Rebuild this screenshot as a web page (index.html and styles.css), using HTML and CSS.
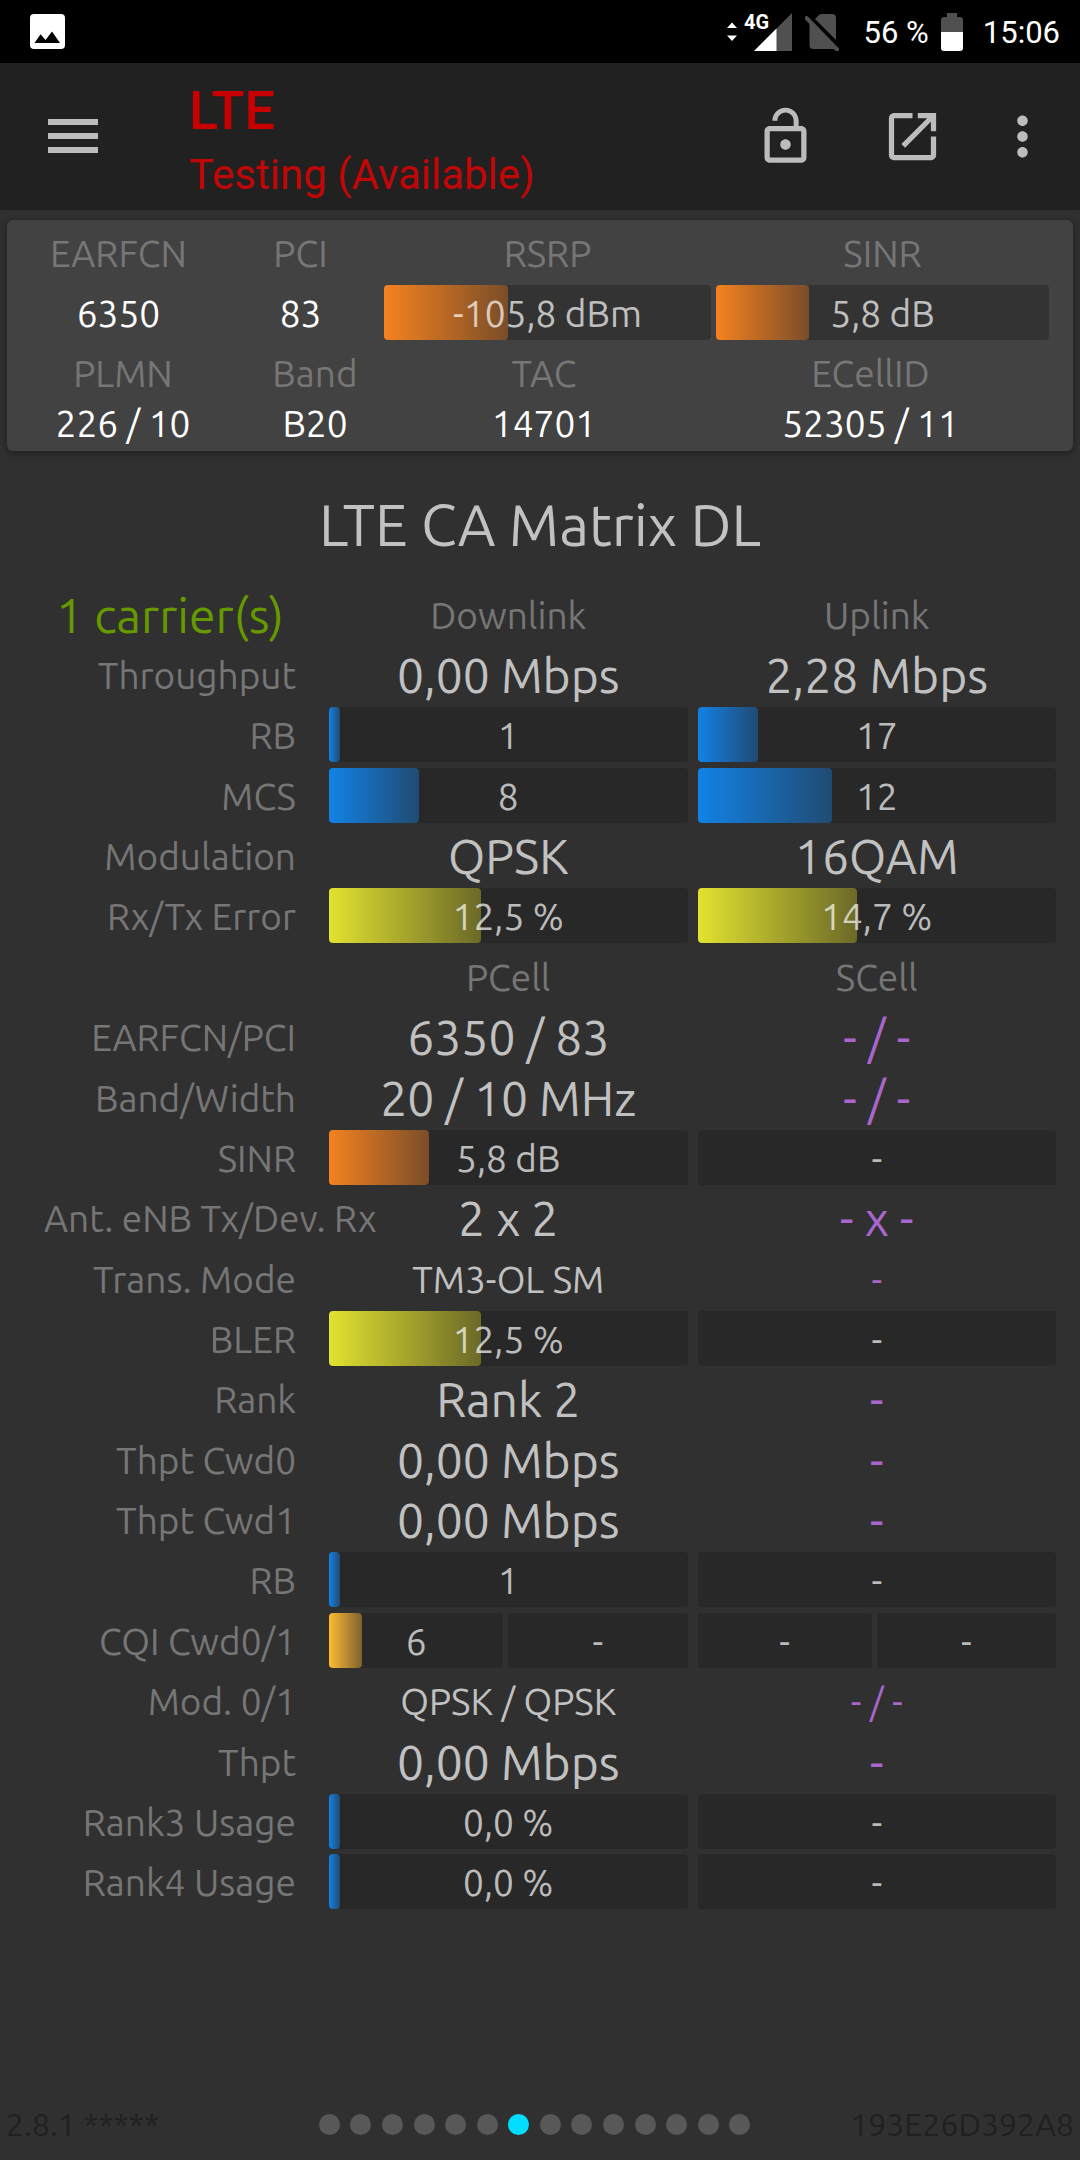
FILE: index.html
```html
<!DOCTYPE html>
<html lang="en">
<head>
  <meta charset="UTF-8">
  <meta name="viewport" content="width=device-width, initial-scale=1">
  <title>LTE CA Matrix DL</title>
  <link rel="stylesheet" href="styles.css">
</head>
<body>

<div class="status-bar">
  <svg class="status-picture" width="35" height="35" viewBox="0 0 35 35">
    <rect width="35" height="35" rx="4" fill="#fff"/>
    <path d="M4.500 29L10.600 20.300L15.500 26L22 17.500L30 29z" fill="#000"/>
  </svg>
  <svg class="status-signal" width="65" height="50" viewBox="0 -5 65 50">
    <path d="M0 16L5 10.500L10 16zM0 23.500L5 29L10 23.500z" fill="#fff"/>
    <path d="M65 1V39H27z" fill="#505050"/>
    <path d="M49.500 16.500V39H27z" fill="#fff"/>
    <text class="signal-text" x="17" y="17">4G</text>
  </svg>
  <svg class="status-sim" width="34" height="38" viewBox="0 0 34 38">
    <path d="M11 5L14 2Q15 1 17 1H27Q31 1 31 5V27L10 6zM4.500 9L31 36H8Q4.500 36 4.500 32z" fill="#505050"/>
    <path d="M1.500 5L32 36.500" stroke="#505050" stroke-width="4" stroke-linecap="round"/>
  </svg>
  <span class="status-percent">56 %</span>
  <svg class="status-battery" width="22" height="38" viewBox="0 0 22 38">
    <path d="M6 0H16V4H19Q22 4 22 7V19H0V7Q0 4 3 4H6z" fill="#505050"/>
    <path d="M0 19H22V35Q22 38 19 38H3Q0 38 0 35z" fill="#fff"/>
  </svg>
  <span class="status-clock">15:06</span>
</div>

<header>
  <button class="icon-btn" aria-label="Menu">
    <svg viewBox="0 0 63 63"><path d="M6 14H56V20H6zM6 28H56V34H6zM6 42H56V48H6z"/></svg>
  </button>
  <div class="header-text">
    <div class="header-title">LTE</div>
    <div class="header-subtitle">Testing (Available)</div>
  </div>
  <button class="icon-btn btn-lock" aria-label="Lock">
    <svg viewBox="0 0 24 24"><path d="M12 17c1.100 0 2-.9 2-2s-.9-2-2-2-2 .9-2 2 .9 2 2 2zm6-9h-1V6c0-2.760-2.240-5-5-5S7 3.240 7 6h1.900c0-1.710 1.390-3.100 3.100-3.100 1.710 0 3.100 1.390 3.100 3.100v2H6c-1.100 0-2 .9-2 2v10c0 1.100.9 2 2 2h12c1.100 0 2-.9 2-2V10c0-1.100-.9-2-2-2zm0 12H6V10h12v10z"/></svg>
  </button>
  <button class="icon-btn btn-open" aria-label="Open in new window">
    <svg viewBox="0 0 24 24"><path d="M19 19H5V5h7V3H5c-1.110 0-2 .9-2 2v14c0 1.100.89 2 2 2h14c1.100 0 2-.9 2-2v-7h-2v7zM14 3v2h3.590l-9.830 9.830 1.410 1.410L19 6.410V10h2V3h-7z"/></svg>
  </button>
  <button class="icon-btn" aria-label="More options">
    <svg viewBox="0 0 24 24"><path d="M12 8c1.100 0 2-.9 2-2s-.9-2-2-2-2 .9-2 2 .9 2 2 2zm0 2c-1.100 0-2 .9-2 2s.9 2 2 2 2-.9 2-2-.9-2-2-2zm0 6c-1.100 0-2 .9-2 2s.9 2 2 2 2-.9 2-2-.9-2-2-2z"/></svg>
  </button>
</header>

<section class="card">
  <div class="card-signal">
    <div class="card-label">EARFCN</div>
    <div class="card-label">PCI</div>
    <div class="card-label">RSRP</div>
    <div class="card-label">SINR</div>
    <div class="card-value">6350</div>
    <div class="card-value">83</div>
    <div class="bar"><span class="fill orange" style="width: 38%"></span><span class="bar-text">-105,8 dBm</span></div>
    <div class="bar"><span class="fill orange" style="width: 28%"></span><span class="bar-text">5,8 dB</span></div>
  </div>
  <div class="card-cell">
    <div class="card-label">PLMN</div>
    <div class="card-label">Band</div>
    <div class="card-label">TAC</div>
    <div class="card-label">ECellID</div>
    <div class="card-value">226 / 10</div>
    <div class="card-value">B20</div>
    <div class="card-value">14701</div>
    <div class="card-value">52305 / 11</div>
  </div>
</section>

<h1>LTE CA Matrix DL</h1>

<main>
  <table>
    <tr>
      <th class="carriers">1 carrier(s)</th>
      <th class="col-title">Downlink</th>
      <th class="col-title">Uplink</th>
    </tr>
    <tr>
      <th>Throughput</th>
      <td class="text big">0,00 Mbps</td>
      <td class="text big">2,28 Mbps</td>
    </tr>
    <tr>
      <th>RB</th>
      <td><div class="bar"><span class="fill blue" style="width: 3%"></span><span class="bar-text">1</span></div></td>
      <td><div class="bar"><span class="fill blue" style="width: 17%"></span><span class="bar-text">17</span></div></td>
    </tr>
    <tr>
      <th>MCS</th>
      <td><div class="bar"><span class="fill blue" style="width: 25%"></span><span class="bar-text">8</span></div></td>
      <td><div class="bar"><span class="fill blue" style="width: 37.500%"></span><span class="bar-text">12</span></div></td>
    </tr>
    <tr>
      <th>Modulation</th>
      <td class="text big">QPSK</td>
      <td class="text big">16QAM</td>
    </tr>
    <tr>
      <th>Rx/Tx Error</th>
      <td><div class="bar"><span class="fill yellow" style="width: 42.500%"></span><span class="bar-text">12,5 %</span></div></td>
      <td><div class="bar"><span class="fill yellow" style="width: 44.500%"></span><span class="bar-text">14,7 %</span></div></td>
    </tr>
    <tr>
      <th></th>
      <th class="col-title">PCell</th>
      <th class="col-title">SCell</th>
    </tr>
    <tr>
      <th>EARFCN/PCI</th>
      <td class="text big">6350 / 83</td>
      <td class="text big none">- / -</td>
    </tr>
    <tr>
      <th>Band/Width</th>
      <td class="text big">20 / 10 MHz</td>
      <td class="text big none">- / -</td>
    </tr>
    <tr>
      <th>SINR</th>
      <td><div class="bar"><span class="fill orange" style="width: 28%"></span><span class="bar-text">5,8 dB</span></div></td>
      <td><div class="bar"><span class="bar-text">-</span></div></td>
    </tr>
    <tr>
      <th>Ant. eNB Tx/Dev. Rx</th>
      <td class="text big">2 x 2</td>
      <td class="text big none">- x -</td>
    </tr>
    <tr>
      <th>Trans. Mode</th>
      <td class="text">TM3-OL SM</td>
      <td class="text none">-</td>
    </tr>
    <tr>
      <th>BLER</th>
      <td><div class="bar"><span class="fill yellow" style="width: 42.500%"></span><span class="bar-text">12,5 %</span></div></td>
      <td><div class="bar"><span class="bar-text">-</span></div></td>
    </tr>
    <tr>
      <th>Rank</th>
      <td class="text big">Rank 2</td>
      <td class="text big none">-</td>
    </tr>
    <tr>
      <th>Thpt Cwd0</th>
      <td class="text big">0,00 Mbps</td>
      <td class="text big none">-</td>
    </tr>
    <tr>
      <th>Thpt Cwd1</th>
      <td class="text big">0,00 Mbps</td>
      <td class="text big none">-</td>
    </tr>
    <tr>
      <th>RB</th>
      <td><div class="bar"><span class="fill blue" style="width: 3%"></span><span class="bar-text">1</span></div></td>
      <td><div class="bar"><span class="bar-text">-</span></div></td>
    </tr>
    <tr>
      <th>CQI Cwd0/1</th>
      <td>
        <div class="split">
          <div class="bar"><span class="fill amber" style="width: 19%"></span><span class="bar-text">6</span></div>
          <div class="bar"><span class="bar-text">-</span></div>
        </div>
      </td>
      <td>
        <div class="split">
          <div class="bar"><span class="bar-text">-</span></div>
          <div class="bar"><span class="bar-text">-</span></div>
        </div>
      </td>
    </tr>
    <tr>
      <th>Mod. 0/1</th>
      <td class="text">QPSK / QPSK</td>
      <td class="text none">- / -</td>
    </tr>
    <tr>
      <th>Thpt</th>
      <td class="text big">0,00 Mbps</td>
      <td class="text big none">-</td>
    </tr>
    <tr>
      <th>Rank3 Usage</th>
      <td><div class="bar"><span class="fill blue" style="width: 3%"></span><span class="bar-text">0,0 %</span></div></td>
      <td><div class="bar"><span class="bar-text">-</span></div></td>
    </tr>
    <tr>
      <th>Rank4 Usage</th>
      <td><div class="bar"><span class="fill blue" style="width: 3%"></span><span class="bar-text">0,0 %</span></div></td>
      <td><div class="bar"><span class="bar-text">-</span></div></td>
    </tr>
  </table>
</main>

<footer>
  <span>2.8.1 *****</span>
  <nav class="dots">
    <button class="dot" aria-label="Page 1"></button>
    <button class="dot" aria-label="Page 2"></button>
    <button class="dot" aria-label="Page 3"></button>
    <button class="dot" aria-label="Page 4"></button>
    <button class="dot" aria-label="Page 5"></button>
    <button class="dot" aria-label="Page 6"></button>
    <button class="dot active" aria-label="Page 7"></button>
    <button class="dot" aria-label="Page 8"></button>
    <button class="dot" aria-label="Page 9"></button>
    <button class="dot" aria-label="Page 10"></button>
    <button class="dot" aria-label="Page 11"></button>
    <button class="dot" aria-label="Page 12"></button>
    <button class="dot" aria-label="Page 13"></button>
    <button class="dot" aria-label="Page 14"></button>
  </nav>
  <span class="device-id">193E26D392A8</span>
</footer>

</body>
</html>
```
FILE: styles.css
```css
* {
  box-sizing: border-box;
}

body {
  font-family: Ubuntu, "Noto Sans", sans-serif;
  font-size: 37px;
  background-color: #303030;
  color: #c1c1c1;
  margin: 0;
  display: flex;
  flex-direction: column;
  min-height: 100vh;
}

/* status bar */
.status-bar {
  display: flex;
  align-items: center;
  height: 63px;
  padding: 0 20px 0 30px;
  background-color: #000;
  color: #fff;
  font-family: Roboto, sans-serif;
  font-size: 31px;
}

.status-signal {
  margin-left: auto;
}

.signal-text {
  font-size: 20px;
  font-weight: bold;
  fill: #fff;
}

.status-sim {
  margin-left: 13px;
}

.status-percent {
  margin-left: 25px;
  padding-top: 2px;
}

.status-clock {
  padding-top: 2px;
}

.status-battery {
  margin: 0 20px 0 12px;
}

/* toolbar */
header {
  display: flex;
  align-items: center;
  height: 147px;
  padding: 0 26px 0 42px;
  background-color: #212121;
  font-family: Roboto, sans-serif;
}

.icon-btn {
  width: 63px;
  height: 63px;
  padding: 0;
  border: none;
  background: none;
  cursor: pointer;
}

.icon-btn svg {
  display: block;
  width: 100%;
  fill: #bcbcbc;
}

.btn-lock {
  margin-right: 64px;
}

.btn-open {
  margin-right: 47px;
}

.header-text {
  flex: 1;
  margin-left: 84px;
  padding-top: 12px;
  color: #c80000;
}

.header-title {
  font-size: 54px;
  font-weight: 500;
  line-height: 64px;
}

.header-subtitle {
  font-size: 42px;
  line-height: 64px;
  color: #c00606;
}

/* serving cell card */
.card {
  margin: 10px 7px 0;
  padding: 0 16px 4px 13px;
  border-radius: 6px;
  background-color: #424242;
  box-shadow: 0 2px 6px rgba(0, 0, 0, 0.4);
  text-align: center;
}

.card-signal {
  display: grid;
  grid-template-columns: 197fr 157fr 327fr 333fr;
  grid-template-rows: 65px 55px;
  column-gap: 5px;
  align-items: center;
  padding-right: 8px;
}

.card-cell {
  display: grid;
  grid-template-columns: 206fr 178fr 280fr 373fr;
  grid-auto-rows: 50px;
  align-items: center;
  margin-top: 7px;
}

.card-label {
  padding-top: 2px;
  color: #767676;
}

.card-value {
  padding-top: 2px;
  color: #fff;
}

.card .bar {
  background-color: #333;
}

/* bars */
.bar {
  position: relative;
  height: 55px;
  line-height: 57px;
  border-radius: 4px;
  background-color: #282828;
  text-align: center;
}

.fill {
  position: absolute;
  top: 0;
  bottom: 0;
  left: 0;
  border-radius: 4px;
}

.bar-text {
  position: relative;
  color: rgba(255, 255, 255, 0.7);
}

.orange {
  background: linear-gradient(to right, #f5821f, #7a4d29);
}

.blue {
  background: linear-gradient(to right, #1282e6, #204b72);
}

.yellow {
  background: linear-gradient(to right, #e2e230, #6b6928);
}

.amber {
  background: linear-gradient(to right, #ffbb33, #7d612e);
}

.split {
  display: grid;
  grid-template-columns: 34fr 35fr;
  gap: 5px;
}

/* matrix */
main {
  padding: 0 19px 0 44px;
}

h1 {
  margin: 42px 0 27px;
  font-size: 58px;
  font-weight: normal;
  line-height: 64px;
  text-align: center;
}

table {
  width: 100%;
  height: 1328px;
  table-layout: fixed;
  border-collapse: collapse;
}

td {
  padding: 0 5px;
  line-height: 55px;
  text-align: center;
}

.text {
  padding-top: 2px;
}

th {
  width: 280px;
  padding: 2px 28px 0 0;
  color: #767676;
  font-weight: normal;
  line-height: 55px;
  text-align: right;
  white-space: nowrap;
}

.col-title {
  width: auto;
  padding: 2px 5px 0;
  text-align: center;
}

.carriers {
  color: #669900;
  font-size: 48px;
  text-align: center;
}

.big {
  font-size: 48px;
}

.none {
  color: #aa66cc;
}

/* pager */
footer {
  display: grid;
  grid-template-columns: 29fr 40fr 30fr;
  align-items: center;
  height: 72px;
  margin-top: auto;
  padding: 0 6px;
  color: #202020;
  font-size: 32px;
}

.dots {
  display: flex;
  justify-content: space-between;
}

.dot {
  width: 21px;
  height: 21px;
  padding: 0;
  border: none;
  border-radius: 50%;
  background-color: #585858;
  cursor: pointer;
}

.dot.active {
  background-color: #00ddff;
}

.device-id {
  text-align: right;
}
```
